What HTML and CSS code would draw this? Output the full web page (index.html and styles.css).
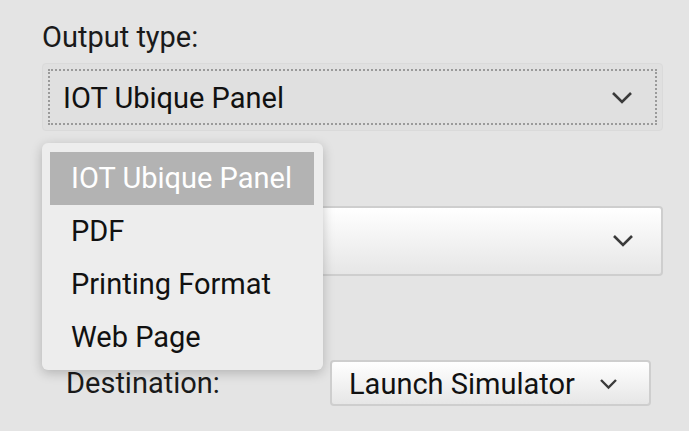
FILE: index.html
```html
<!DOCTYPE html>
<html>
<head>
<meta charset="utf-8">
<link rel="stylesheet" href="styles.css">
</head>
<body>
<div class="panel">
  <div class="label">Output type:</div>
  <div class="select focused">
    <div class="focus-ring">
      <span class="value">IOT Ubique Panel</span>
      <svg class="chev" width="22" height="14" viewBox="0 0 22 14"><polyline points="2,2 11,11 20,2" fill="none" stroke="#3a3a3a" stroke-width="2.6"/></svg>
    </div>
  </div>
  <div class="select light second">
    <span class="value"></span>
    <svg class="chev" width="22" height="14" viewBox="0 0 22 14"><polyline points="2,2 11,11 20,2" fill="none" stroke="#3a3a3a" stroke-width="2.6"/></svg>
  </div>
  <div class="row">
    <span class="row-label">Destination:</span>
    <div class="select light small">
      <span class="value">Launch Simulator</span>
      <svg class="chev" width="19" height="12" viewBox="0 0 19 12"><polyline points="2,2 9.5,9.5 17,2" fill="none" stroke="#3a3a3a" stroke-width="2.4"/></svg>
    </div>
  </div>
  <ul class="menu">
    <li class="item selected">IOT Ubique Panel</li>
    <li class="item">PDF</li>
    <li class="item">Printing Format</li>
    <li class="item">Web Page</li>
  </ul>
</div>
</body>
</html>
```

FILE: styles.css
```css
html, body {
  margin: 0;
  padding: 0;
  background: #e4e4e4;
}
body {
  font-family: Roboto, "Noto Sans", sans-serif;
  font-size: 29px;
  color: #111;
  width: 689px;
  height: 431px;
  overflow: hidden;
}
.panel {
  position: relative;
  padding: 21px 26px 0 42px;
}
.label {
  line-height: 32px;
  height: 32px;
  color: #1a1a1a;
}
.select {
  box-sizing: border-box;
  display: flex;
  align-items: center;
  justify-content: space-between;
  border-radius: 4px;
}
.select .value {
  line-height: 32px;
}
.focused {
  margin-top: 10px;
  height: 68px;
  background: #e0e0e0;
  border: 1px solid #dadada;
  padding: 5px;
}
.focus-ring {
  box-sizing: border-box;
  flex: 1;
  height: 100%;
  border: 2px dotted #9a9a9a;
  display: flex;
  align-items: center;
  justify-content: space-between;
  padding: 2px 22px 0 13px;
}
.light {
  background: linear-gradient(#ffffff, #e6e6e6);
  border: 2px solid #cecece;
}
.second {
  margin-top: 75px;
  height: 70px;
  padding: 0 27px 0 20px;
}
.row {
  margin-top: 84px;
  display: grid;
  grid-template-columns: 264px 321px;
  align-items: center;
  padding-left: 24px;
}
.row-label {
  line-height: 32px;
  color: #1a1a1a;
}
.small {
  height: 46px;
  padding: 2px 31px 0 17px;
}
.menu {
  position: absolute;
  left: 42px;
  top: 143px;
  width: 281px;
  box-sizing: border-box;
  margin: 0;
  padding: 9px 9px 6px 8px;
  list-style: none;
  background: #ededed;
  border-radius: 6px;
  box-shadow: 0 3px 12px rgba(0, 0, 0, 0.22);
}
.item {
  height: 53px;
  line-height: 53px;
  padding-left: 21px;
  color: #111;
}
.item.selected {
  background: #b3b3b3;
  color: #ffffff;
}
```
